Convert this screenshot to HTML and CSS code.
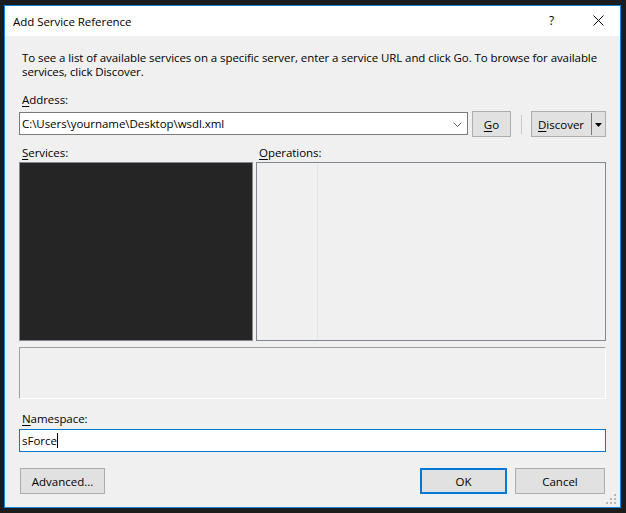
FILE: index.html
```html
<!DOCTYPE html>
<html>
<head>
<meta charset="utf-8">
<link rel="stylesheet" href="styles.css">
</head>
<body>
<div class="window">
  <div class="titlebar">
    <span class="title">Add Service Reference</span>
    <span class="help">?</span>
    <svg class="close" width="11" height="11" viewBox="0 0 11 11"><path d="M0.5 0.5 L10.5 10.5 M10.5 0.5 L0.5 10.5" stroke="#000" stroke-width="1" fill="none"/></svg>
  </div>
  <div class="content">
    <p class="desc">To see a list of available services on a specific server, enter a service URL and click Go. To browse for available services, click Discover.</p>
    <div class="label"><u>A</u>ddress:</div>
    <div class="addr-row">
      <div class="combo">
        <span class="combo-text">C:\Users\yourname\Desktop\wsdl.xml</span>
        <svg class="chev" width="9" height="5" viewBox="0 0 9 5"><path d="M0.5 0.5 L4.5 4.5 L8.5 0.5" stroke="#606060" fill="none"/></svg>
      </div>
      <div class="btn go"><u>G</u>o</div>
      <div class="vsep"></div>
      <div class="btn discover">
        <span class="disc-label"><u>D</u>iscover</span>
        <span class="disc-split"></span>
        <svg class="disc-arrow" width="7" height="4" viewBox="0 0 7 4"><path d="M0 0 H7 L3.5 4 Z" fill="#000"/></svg>
      </div>
    </div>
    <div class="lists-labels">
      <div class="label svc-label"><u>S</u>ervices:</div>
      <div class="label ops-label"><u>O</u>perations:</div>
    </div>
    <div class="lists">
      <div class="services"></div>
      <div class="operations"><div class="ops-col"></div></div>
    </div>
    <div class="descbox"></div>
    <div class="label ns-label"><u>N</u>amespace:</div>
    <div class="ns-input"><span>sForce</span><span class="caret"></span></div>
    <div class="btn-row">
      <div class="btn advanced">Advanced...</div>
      <div class="spacer"></div>
      <div class="btn ok">OK</div>
      <div class="btn cancel">Cancel</div>
    </div>
    <svg class="grip" width="11" height="11" viewBox="0 0 11 11">
      <rect x="8" y="0" width="2" height="2" fill="#b8b8b8"/>
      <rect x="4" y="4" width="2" height="2" fill="#b8b8b8"/>
      <rect x="8" y="4" width="2" height="2" fill="#b8b8b8"/>
      <rect x="0" y="8" width="2" height="2" fill="#b8b8b8"/>
      <rect x="4" y="8" width="2" height="2" fill="#b8b8b8"/>
      <rect x="8" y="8" width="2" height="2" fill="#b8b8b8"/>
    </svg>
  </div>
</div>
</body>
</html>
```

FILE: styles.css
```css
html, body {
  margin: 0;
  padding: 0;
  background: #1c1c1c;
  width: 626px;
  height: 513px;
  overflow: hidden;
}
body {
  font-family: "Open Sans", "Noto Sans", sans-serif;
  font-size: 11.5px;
  color: #000;
}
u { text-decoration: underline; text-underline-offset: 2px; }
.window {
  margin: 5px 0 0 4px;
  width: 615px;
  height: 501px;
  border: 1px solid #1883d7;
  background: #f0f0f0;
  display: flex;
  flex-direction: column;
}
.titlebar {
  height: 30px;
  background: #fff;
  display: flex;
  align-items: center;
  position: relative;
}
.title {
  margin-left: 8px;
  font-size: 11.5px;
  letter-spacing: -0.05px;
}
.help {
  position: absolute;
  left: 544px;
  top: 6px;
  font-size: 12px;
}
.close {
  position: absolute;
  left: 588px;
  top: 9px;
}
.content {
  flex: 1;
  padding: 0 14px;
  display: flex;
  flex-direction: column;
  position: relative;
}
.desc {
  margin: 15px 0 0 3px;
  line-height: 14px;
  width: 580px;
  letter-spacing: -0.08px;
}
.label {
  line-height: 14px;
  margin-left: 3px;
  letter-spacing: -0.05px;
}
.desc + .label { margin-top: 14px; }
.addr-row {
  display: flex;
  margin-top: 4px;
  height: 26px;
}
.combo {
  width: 447px;
  height: 21px;
  margin-top: 1px;
  border: 1px solid #7a7a7a;
  background: #fff;
  display: flex;
  align-items: center;
  position: relative;
}
.combo-text {
  margin-left: 2px;
  font-size: 11.5px;
  letter-spacing: -0.05px;
}
.chev {
  position: absolute;
  right: 5px;
  top: 9px;
}
.btn {
  box-sizing: border-box;
  background: #e1e1e1;
  border: 1px solid #adadad;
  display: flex;
  align-items: center;
  justify-content: center;
  font-size: 11.5px;
}
.go {
  width: 39px;
  height: 26px;
  margin-left: 4px;
}
.vsep {
  width: 1px;
  height: 19px;
  margin: 4px 9px 0 10px;
  background: #c8c8c8;
}
.discover {
  width: 75px;
  height: 26px;
  justify-content: flex-start;
  position: relative;
}
.disc-label { margin-left: 6px; }
.disc-split {
  position: absolute;
  left: 59px;
  top: 1px;
  width: 1px;
  height: 22px;
  background: #7a7a7a;
}
.disc-arrow {
  position: absolute;
  left: 63px;
  top: 11px;
}
.lists-labels {
  display: flex;
  margin-top: 9px;
}
.svc-label { width: 234px; }
.ops-label { margin-left: 3px; }
.lists {
  display: flex;
  margin-top: 2px;
  height: 179px;
  gap: 3px;
}
.services {
  box-sizing: border-box;
  width: 234px;
  height: 179px;
  background: #252526;
  border: 1px solid #828790;
}
.operations {
  box-sizing: border-box;
  width: 350px;
  height: 179px;
  background: #f0f0f0;
  border: 1px solid #828790;
  display: flex;
}
.ops-col {
  width: 60px;
  border-right: 1px solid #e2e5ea;
}
.descbox {
  box-sizing: border-box;
  margin-top: 6px;
  height: 52px;
  border-top: 1px solid #a0a0a0;
  border-left: 1px solid #a0a0a0;
  border-bottom: 1px solid #fff;
  border-right: 1px solid #fff;
}
.ns-label { margin-top: 13px; }
.ns-input {
  box-sizing: border-box;
  margin-top: 3px;
  height: 23px;
  border: 1px solid #0078d7;
  background: #fff;
  display: flex;
  align-items: center;
  padding-left: 2px;
  font-size: 11.5px;
}
.caret {
  display: inline-block;
  width: 1px;
  height: 15px;
  background: #000;
}
.btn-row {
  display: flex;
  margin-top: 16px;
  height: 26px;
}
.advanced {
  width: 85px;
  height: 26px;
  margin-left: 1px;
}
.spacer { flex: 1; }
.ok {
  width: 87px;
  height: 26px;
  border: 2px solid #0078d7;
}
.cancel {
  width: 90px;
  height: 26px;
  margin-left: 8px;
  margin-right: 1px;
}
.grip {
  position: absolute;
  right: 3px;
  bottom: 2px;
}
```
